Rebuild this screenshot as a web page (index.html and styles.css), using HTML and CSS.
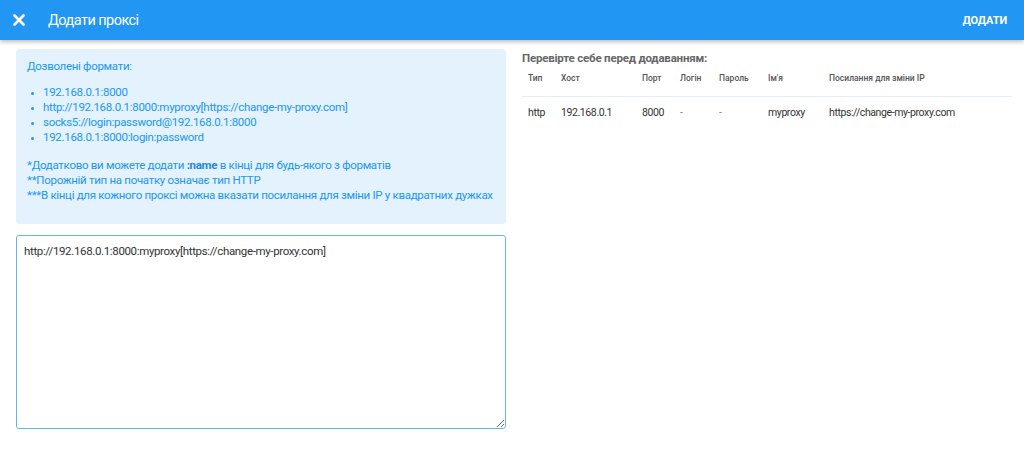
FILE: index.html
```html
<!DOCTYPE html>
<html lang="uk">
<head>
<meta charset="utf-8">
<title>Додати проксі</title>
<link rel="stylesheet" href="styles.css">
</head>
<body>
<header class="toolbar">
  <button class="close" aria-label="close">
    <svg width="12" height="12" viewBox="0 0 12 12"><path d="M1.5 1.5 L10.5 10.5 M10.5 1.5 L1.5 10.5" stroke="#fff" stroke-width="2.6" stroke-linecap="round"/></svg>
  </button>
  <h1 class="title">Додати проксі</h1>
  <button class="add">ДОДАТИ</button>
</header>
<main class="content">
  <section class="left">
    <div class="info">
      <div class="info-title">Дозволені формати:</div>
      <ul class="formats">
        <li>192.168.0.1:8000</li>
        <li>http://192.168.0.1:8000:myproxy[https://change-my-proxy.com]</li>
        <li>socks5://login:password@192.168.0.1:8000</li>
        <li>192.168.0.1:8000:login:password</li>
      </ul>
      <div class="notes">
        <div>*Додатково ви можете додати <b>:name</b> в кінці для будь-якого з форматів</div>
        <div>**Порожній тип на початку означає тип HTTP</div>
        <div>***В кінці для кожного проксі можна вказати посилання для зміни IP у квадратних дужках</div>
      </div>
    </div>
    <textarea class="input">http://192.168.0.1:8000:myproxy[https://change-my-proxy.com]</textarea>
  </section>
  <section class="right">
    <h2 class="check">Перевірте себе перед додаванням:</h2>
    <table class="preview">
      <thead>
        <tr>
          <th class="c-type">Тип</th>
          <th class="c-host">Хост</th>
          <th class="c-port">Порт</th>
          <th class="c-login">Логін</th>
          <th class="c-pass">Пароль</th>
          <th class="c-name">Ім'я</th>
          <th class="c-link">Посилання для зміни IP</th>
        </tr>
      </thead>
      <tbody>
        <tr>
          <td>http</td>
          <td>192.168.0.1</td>
          <td>8000</td>
          <td class="dash">-</td>
          <td class="dash">-</td>
          <td>myproxy</td>
          <td>https://change-my-proxy.com</td>
        </tr>
      </tbody>
    </table>
  </section>
</main>
</body>
</html>
```
FILE: styles.css
```css
* { box-sizing: border-box; }
html, body { margin: 0; padding: 0; background: #fff; }
body { font-family: Roboto, "Liberation Sans", sans-serif; color: #333; }

.toolbar {
  height: 40px;
  background: #2196f3;
  display: flex;
  align-items: center;
  box-shadow: 0 2px 4px rgba(0,0,0,0.25);
  color: #fff;
  position: relative;
}
.close {
  background: none; border: 0; padding: 0;
  margin-left: 13px; width: 12px; height: 12px;
  display: flex;
}
.title {
  margin: 0 0 0 23px;
  font-size: 14.5px;
  font-weight: 400;
  letter-spacing: -0.55px;
}
.add {
  margin-left: auto; margin-right: 17px;
  background: none; border: 0; color: #fff;
  font-family: Roboto, sans-serif;
  font-size: 11px; font-weight: 700;
  letter-spacing: -0.1px;
  padding: 0;
}

.content {
  display: grid;
  grid-template-columns: 490px 490px;
  column-gap: 16px;
  padding: 9px 12px 0 16px;
}

.info {
  background: #e3f2fd;
  border-radius: 4px;
  padding: 10px 11px 21px;
  color: #2196f3;
  font-size: 11.5px;
  line-height: 15px;
  letter-spacing: -0.3px;
}
.formats { margin: 11px 0 0; padding-left: 16px; }
.formats li::marker { font-size: 9px; }
.notes { margin-top: 13px; }
.notes b { font-weight: 700; color: #1e88e5; }

.input {
  display: block;
  width: 100%;
  height: 194px;
  margin-top: 11px;
  border: 1px solid #64b5f6;
  border-radius: 3px;
  padding: 8px 7px;
  font-family: Roboto, sans-serif;
  font-size: 11.5px;
  line-height: 15px;
  letter-spacing: -0.35px;
  color: #333;
  resize: vertical;
  outline: none;
}

.check {
  margin: 2px 0 0;
  font-size: 11.5px;
  font-weight: 700;
  color: #666;
  line-height: 15px;
  letter-spacing: -0.2px;
}
.preview {
  width: 100%;
  border-collapse: collapse;
  table-layout: fixed;
  margin-top: 2px;
}
.preview th {
  font-size: 8.5px;
  font-weight: 500;
  color: #555;
  text-align: left;
  height: 28px;
  line-height: 10px;
  vertical-align: top;
  padding: 5px 6px 0;
  border-bottom: 1px solid #e6edf3;
}
.preview td {
  font-size: 10.5px;
  color: #333;
  height: 32px;
  padding: 0 6px;
  letter-spacing: -0.4px;
}
.preview td.dash { color: #888; }
.c-type { width: 33px; }
.c-host { width: 81px; }
.c-port { width: 38px; }
.c-login { width: 39px; }
.c-pass { width: 49px; }
.c-name { width: 61px; }
```
